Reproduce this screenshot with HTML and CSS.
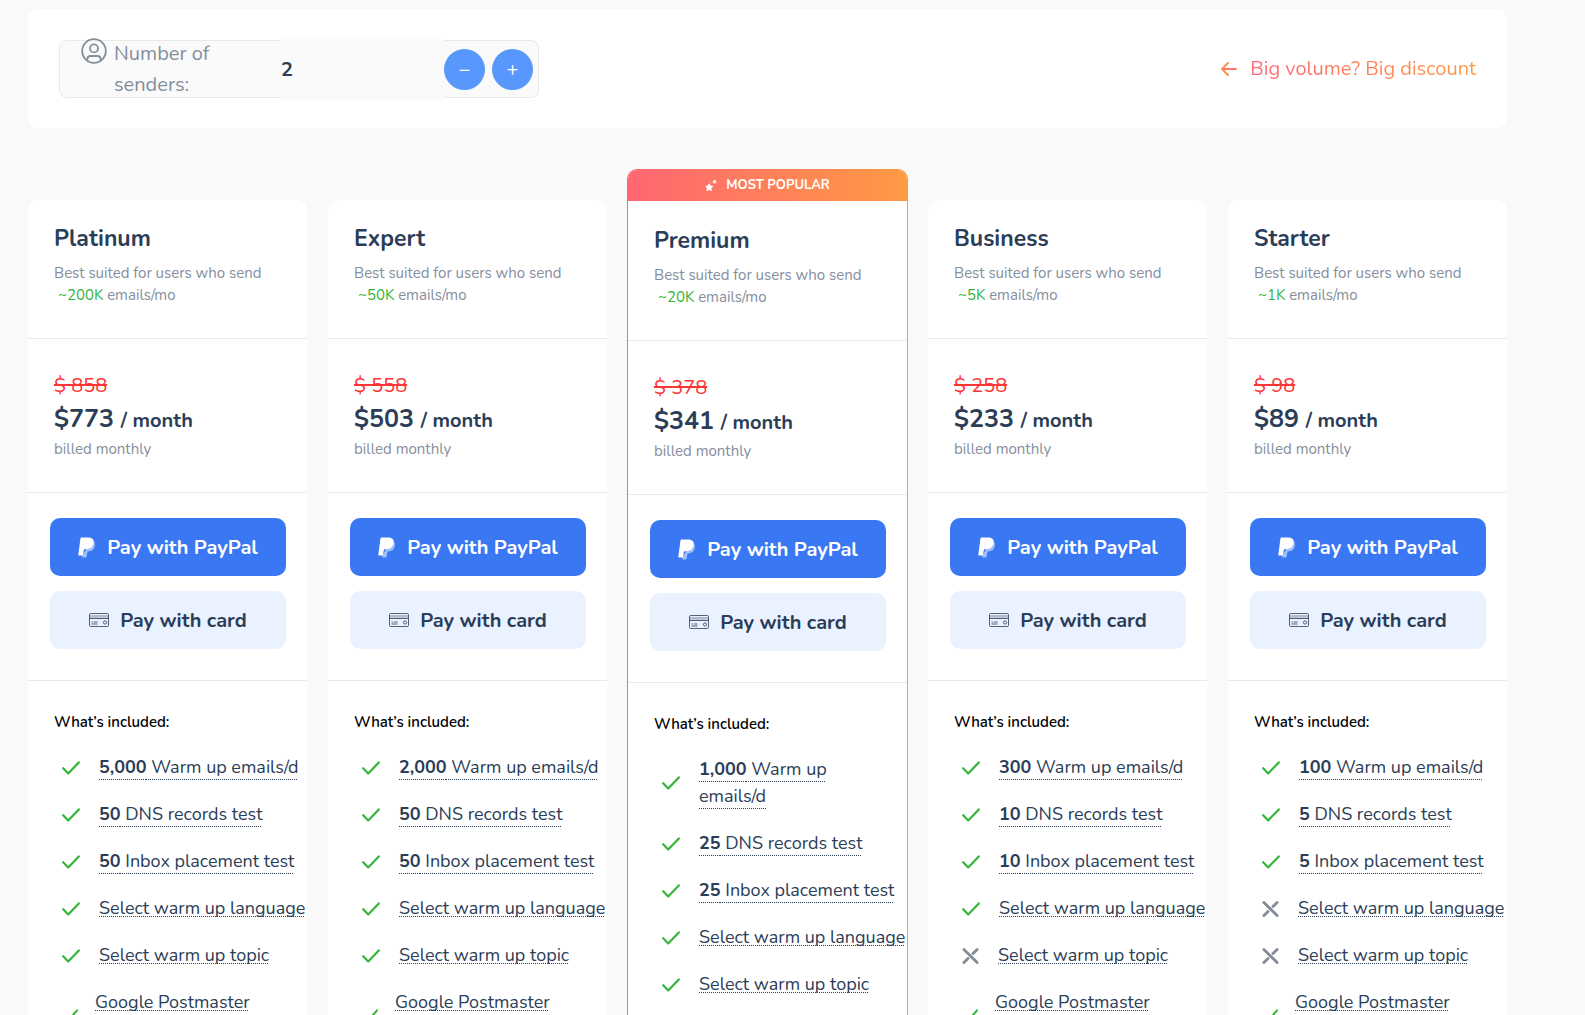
FILE: index.html
```html
<!DOCTYPE html>
<html lang="en">
<head>
    <meta charset="UTF-8">
    <meta name="viewport" content="width=device-width, initial-scale=1.0">
    <title>Pricing</title>
    <link rel="stylesheet" href="styles.css">
</head>
<body>

    <!-- Shared icons -->
    <svg class="icon-defs" aria-hidden="true">
        <symbol id="check" viewBox="0 0 18 14" preserveAspectRatio="none">
            <path d="M1.2 7.2 L6.2 12.4 L16.8 1.4" fill="none" stroke="#34b53a" stroke-width="2.2" stroke-linecap="round" stroke-linejoin="round"/>
        </symbol>
        <symbol id="cross" viewBox="0 0 18 18">
            <path d="M2 2 L16 16 M16 2 L11.6 6.4 M6.4 11.6 L2 16" fill="none" stroke="#858c98" stroke-width="3" stroke-linecap="round"/>
        </symbol>
        <symbol id="paypal" viewBox="0 0 18 21">
            <path d="M14.8 3.6 C16.8 4.8 17.4 6.8 16.7 9.6 C15.8 13 13.4 14.5 10.4 14.5 H9.6 L8.6 19.6 C8.5 20.3 8 20.6 7.4 20.6 H4.2 L4.7 17.6 Z" fill="#9fbff9"/>
            <path d="M3.4 0.4 H10.2 C14.4 0.4 16.4 2.6 15.6 6.3 C14.8 10.3 12 12.2 8.5 12.2 H6.8 C6.2 12.2 5.9 12.5 5.8 13.1 L4.9 18.6 H0.9 C0.4 18.6 0.2 18.3 0.3 17.8 L2.5 1.2 C2.6 0.7 2.9 0.4 3.4 0.4 Z" fill="#ffffff"/>
        </symbol>
        <symbol id="card" viewBox="0 0 20 14">
            <g fill="none" stroke="#2b3d57" stroke-width="0.8">
                <rect x="0.5" y="0.5" width="19" height="13" rx="1.2"/>
                <path d="M0.5 3 H19.5" stroke-width="0.6"/>
                <path d="M0.5 5.3 H19.5" stroke-width="1"/>
                <path d="M2.5 9 H4 M5 9 H8.5 M2.5 11 H8.5" stroke-width="0.8"/>
                <circle cx="16" cy="9.5" r="1.6"/>
            </g>
        </symbol>
    </svg>

    <div class="container">

        <!-- Senders bar -->
        <div class="topbar">
            <div class="senders">
                <svg class="user-icon" viewBox="0 0 26 26" fill="none" stroke="#858e9d" stroke-width="1.8" aria-hidden="true">
                    <circle cx="13" cy="13" r="11.8"/>
                    <circle cx="13" cy="10.4" r="4"/>
                    <path d="M6.4 22.4 V21 C6.4 19 7.6 18 9.4 18 H16.6 C18.4 18 19.6 19 19.6 21 V22.4"/>
                </svg>
                <label for="senders">Number of senders:</label>
                <input type="text" id="senders" value="2">
                <button type="button" class="round-btn" aria-label="Remove sender">−</button>
                <button type="button" class="round-btn" aria-label="Add sender">+</button>
            </div>
            <a href="#" class="discount">
                <svg width="16" height="14" viewBox="0 0 16 14" fill="none" stroke-width="2" stroke-linecap="round" stroke-linejoin="round" aria-hidden="true">
                    <path d="M15 7 H2" stroke="#ff7866"/>
                    <path d="M7 1 L1 7 L7 13" stroke="#ff8f4c"/>
                </svg>
                <span>Big volume? Big discount</span>
            </a>
        </div>

        <!-- Plans -->
        <div class="plans">

            <div class="plan">
                <div class="plan-head">
                    <h2>Platinum</h2>
                    <p>Best suited for users who send<br>&nbsp;<span class="volume">~200K</span> emails/mo</p>
                </div>
                <div class="plan-price">
                    <del>$ 858</del>
                    <div class="price">$773 <small>/ month</small></div>
                    <p>billed monthly</p>
                </div>
                <div class="plan-buttons">
                    <button type="button" class="btn btn-paypal"><svg width="18" height="21"><use href="#paypal"/></svg>Pay with PayPal</button>
                    <button type="button" class="btn btn-card"><svg width="20" height="14"><use href="#card"/></svg>Pay with card</button>
                </div>
                <div class="plan-features">
                    <h3>What’s included:</h3>
                    <ul>
                        <li><svg class="check"><use href="#check"/></svg><span class="count"><b>5,000</b> Warm up emails/d</span></li>
                        <li><svg class="check"><use href="#check"/></svg><span class="count"><b>50</b> DNS records test</span></li>
                        <li><svg class="check"><use href="#check"/></svg><span class="count"><b>50</b> Inbox placement test</span></li>
                        <li><svg class="check"><use href="#check"/></svg><span>Select warm up language</span></li>
                        <li><svg class="check"><use href="#check"/></svg><span>Select warm up topic</span></li>
                        <li class="wide"><svg class="check"><use href="#check"/></svg><span>Google Postmaster<br>integration</span></li>
                    </ul>
                </div>
            </div>

            <div class="plan">
                <div class="plan-head">
                    <h2>Expert</h2>
                    <p>Best suited for users who send<br>&nbsp;<span class="volume">~50K</span> emails/mo</p>
                </div>
                <div class="plan-price">
                    <del>$ 558</del>
                    <div class="price">$503 <small>/ month</small></div>
                    <p>billed monthly</p>
                </div>
                <div class="plan-buttons">
                    <button type="button" class="btn btn-paypal"><svg width="18" height="21"><use href="#paypal"/></svg>Pay with PayPal</button>
                    <button type="button" class="btn btn-card"><svg width="20" height="14"><use href="#card"/></svg>Pay with card</button>
                </div>
                <div class="plan-features">
                    <h3>What’s included:</h3>
                    <ul>
                        <li><svg class="check"><use href="#check"/></svg><span class="count"><b>2,000</b> Warm up emails/d</span></li>
                        <li><svg class="check"><use href="#check"/></svg><span class="count"><b>50</b> DNS records test</span></li>
                        <li><svg class="check"><use href="#check"/></svg><span class="count"><b>50</b> Inbox placement test</span></li>
                        <li><svg class="check"><use href="#check"/></svg><span>Select warm up language</span></li>
                        <li><svg class="check"><use href="#check"/></svg><span>Select warm up topic</span></li>
                        <li class="wide"><svg class="check"><use href="#check"/></svg><span>Google Postmaster<br>integration</span></li>
                    </ul>
                </div>
            </div>

            <div class="plan popular">
                <div class="badge">
                    <svg width="12" height="14" viewBox="0 0 12 14" fill="#ffffff" aria-hidden="true">
                        <path d="M4.2 5 L5.6 7.6 L8.4 8.2 L6.4 10.3 L6.8 13.2 L4.2 12 L1.5 13.2 L1.9 10.3 L0 8.2 L2.8 7.6 Z"/>
                        <path d="M9.6 1.4 L10.3 2.8 L11.8 3.1 L10.7 4.2 L11 5.8 L9.6 5 L8.1 5.8 L8.4 4.2 L7.3 3.1 L8.9 2.8 Z"/>
                    </svg>
                    MOST POPULAR
                </div>
                <div class="plan-head">
                    <h2>Premium</h2>
                    <p>Best suited for users who send<br>&nbsp;<span class="volume">~20K</span> emails/mo</p>
                </div>
                <div class="plan-price">
                    <del>$ 378</del>
                    <div class="price">$341 <small>/ month</small></div>
                    <p>billed monthly</p>
                </div>
                <div class="plan-buttons">
                    <button type="button" class="btn btn-paypal"><svg width="18" height="21"><use href="#paypal"/></svg>Pay with PayPal</button>
                    <button type="button" class="btn btn-card"><svg width="20" height="14"><use href="#card"/></svg>Pay with card</button>
                </div>
                <div class="plan-features">
                    <h3>What’s included:</h3>
                    <ul>
                        <li><svg class="check"><use href="#check"/></svg><span class="count"><b>1,000</b> Warm up<br>emails/d</span></li>
                        <li><svg class="check"><use href="#check"/></svg><span class="count"><b>25</b> DNS records test</span></li>
                        <li><svg class="check"><use href="#check"/></svg><span class="count"><b>25</b> Inbox placement test</span></li>
                        <li><svg class="check"><use href="#check"/></svg><span>Select warm up language</span></li>
                        <li><svg class="check"><use href="#check"/></svg><span>Select warm up topic</span></li>
                        <li class="wide"><svg class="check"><use href="#check"/></svg><span>Google Postmaster<br>integration</span></li>
                    </ul>
                </div>
            </div>

            <div class="plan">
                <div class="plan-head">
                    <h2>Business</h2>
                    <p>Best suited for users who send<br>&nbsp;<span class="volume">~5K</span> emails/mo</p>
                </div>
                <div class="plan-price">
                    <del>$ 258</del>
                    <div class="price">$233 <small>/ month</small></div>
                    <p>billed monthly</p>
                </div>
                <div class="plan-buttons">
                    <button type="button" class="btn btn-paypal"><svg width="18" height="21"><use href="#paypal"/></svg>Pay with PayPal</button>
                    <button type="button" class="btn btn-card"><svg width="20" height="14"><use href="#card"/></svg>Pay with card</button>
                </div>
                <div class="plan-features">
                    <h3>What’s included:</h3>
                    <ul>
                        <li><svg class="check"><use href="#check"/></svg><span class="count"><b>300</b> Warm up emails/d</span></li>
                        <li><svg class="check"><use href="#check"/></svg><span class="count"><b>10</b> DNS records test</span></li>
                        <li><svg class="check"><use href="#check"/></svg><span class="count"><b>10</b> Inbox placement test</span></li>
                        <li><svg class="check"><use href="#check"/></svg><span>Select warm up language</span></li>
                        <li><svg class="cross"><use href="#cross"/></svg><span>Select warm up topic</span></li>
                        <li class="wide"><svg class="check"><use href="#check"/></svg><span>Google Postmaster<br>integration</span></li>
                    </ul>
                </div>
            </div>

            <div class="plan">
                <div class="plan-head">
                    <h2>Starter</h2>
                    <p>Best suited for users who send<br>&nbsp;<span class="volume">~1K</span> emails/mo</p>
                </div>
                <div class="plan-price">
                    <del>$ 98</del>
                    <div class="price">$89 <small>/ month</small></div>
                    <p>billed monthly</p>
                </div>
                <div class="plan-buttons">
                    <button type="button" class="btn btn-paypal"><svg width="18" height="21"><use href="#paypal"/></svg>Pay with PayPal</button>
                    <button type="button" class="btn btn-card"><svg width="20" height="14"><use href="#card"/></svg>Pay with card</button>
                </div>
                <div class="plan-features">
                    <h3>What’s included:</h3>
                    <ul>
                        <li><svg class="check"><use href="#check"/></svg><span class="count"><b>100</b> Warm up emails/d</span></li>
                        <li><svg class="check"><use href="#check"/></svg><span class="count"><b>5</b> DNS records test</span></li>
                        <li><svg class="check"><use href="#check"/></svg><span class="count"><b>5</b> Inbox placement test</span></li>
                        <li><svg class="cross"><use href="#cross"/></svg><span>Select warm up language</span></li>
                        <li><svg class="cross"><use href="#cross"/></svg><span>Select warm up topic</span></li>
                        <li class="wide"><svg class="check"><use href="#check"/></svg><span>Google Postmaster<br>integration</span></li>
                    </ul>
                </div>
            </div>

        </div>
    </div>

</body>
</html>
```
FILE: styles.css
```css
* {
    box-sizing: border-box;
}
body {
    margin: 0;
    background-color: #f9f9f9;
    color: #2b3d57;
    font-family: Nunito, Lato, "Open Sans", sans-serif;
}
h2, h3, p, ul {
    margin: 0;
    padding: 0;
}
.icon-defs {
    display: none;
}
.container {
    padding: 9px 78px 40px 28px;
}
/* Senders bar */
.topbar {
    display: flex;
    justify-content: space-between;
    align-items: center;
    padding: 31px 31px 30px;
    background-color: #fff;
    border-radius: 10px;
}
.senders {
    display: flex;
    align-items: center;
    width: 480px;
    height: 58px;
    padding: 0 5px 0 21px;
    background-color: #fafafa;
    border: 1px solid #e9e9e9;
    border-radius: 8px;
}
.user-icon {
    flex: none;
    align-self: flex-start;
    width: 26px;
    height: 26px;
    margin-top: -3px;
    margin-right: 7px;
}
.senders label {
    flex: 1;
    padding-right: 60px;
    font-size: 20px;
    line-height: 31px;
    color: #858e9d;
}
.senders input {
    flex: none;
    width: 163px;
    height: 61px;
    padding: 0;
    border: none;
    background-color: #fafafa;
    color: #2b3d57;
    font-family: inherit;
    font-size: 20px;
    font-weight: 700;
}
.round-btn {
    flex: none;
    width: 41px;
    height: 41px;
    padding: 0;
    border: none;
    border-radius: 50%;
    background-color: #5897fc;
    color: #fff;
    font-family: inherit;
    font-size: 20px;
    cursor: pointer;
}
.round-btn + .round-btn {
    margin-left: 7px;
}
.discount {
    display: flex;
    align-items: center;
    gap: 13px;
    font-size: 20px;
    line-height: 30px;
    text-decoration: none;
}
.discount span {
    background: linear-gradient(90deg, #ff6672, #ff9a44);
    -webkit-background-clip: text;
    background-clip: text;
    color: transparent;
}
/* Plans */
.plans {
    display: grid;
    grid-template-columns: repeat(5, minmax(0, 1fr));
    gap: 21px;
    align-items: start;
    margin-top: 41px;
}
.plan {
    margin-top: 31px;
    background-color: #fff;
    border-radius: 10px;
}
.popular {
    margin: 0 -1px;
    border: 1px solid transparent;
    background: linear-gradient(#fff, #fff) padding-box, linear-gradient(90deg, #ff6672, #ff9a44) border-box;
}
.badge {
    display: flex;
    justify-content: center;
    align-items: center;
    gap: 9px;
    height: 31px;
    padding-bottom: 2px;
    border-radius: 9px 9px 0 0;
    background: linear-gradient(90deg, #ff6672, #ff9a44);
    color: #fff;
    font-size: 13px;
    font-weight: 700;
}
.plan-head {
    height: 139px;
    padding: 22px 26px 0;
    border-bottom: 1px solid #e9e9e9;
}
.popular .plan-head {
    height: 140px;
    padding-top: 23px;
}
.plan-head h2 {
    font-size: 23px;
    font-weight: 700;
    line-height: 34px;
}
.plan-head p, .plan-price p {
    font-size: 15px;
    line-height: 22px;
    color: #858e9d;
    white-space: nowrap;
}
.plan-head p {
    margin-top: 6px;
}
.volume {
    color: #34b53a;
}
.plan-price {
    height: 154px;
    padding: 31px 26px 0;
    border-bottom: 1px solid #e9e9e9;
}
.plan-price del {
    display: block;
    font-size: 20px;
    line-height: 32px;
    color: #fc3535;
    text-decoration-thickness: 2px;
}
.price {
    font-size: 25px;
    font-weight: 700;
    line-height: 34px;
}
.price small {
    font-size: 20px;
}
.plan-buttons {
    display: flex;
    flex-direction: column;
    gap: 15px;
    padding: 25px 21px 31px 22px;
    border-bottom: 1px solid #e9e9e9;
}
.btn {
    display: flex;
    justify-content: center;
    align-items: center;
    gap: 11px;
    height: 58px;
    padding: 0;
    border: none;
    border-radius: 10px;
    font-family: inherit;
    font-size: 20px;
    font-weight: 700;
    cursor: pointer;
}
.btn-paypal {
    background-color: #3a77f3;
    color: #fff;
}
.btn-card {
    background-color: #eaf1ff;
    color: #2b3d57;
}
.plan-features {
    padding: 29px 0 30px 26px;
}
.plan-features h3 {
    font-size: 15px;
    font-weight: 600;
    line-height: 24px;
    color: #000;
}
.plan-features ul {
    display: flex;
    flex-direction: column;
    gap: 20px;
    margin-top: 20px;
    padding-left: 8px;
    list-style: none;
}
.plan-features li {
    display: flex;
    align-items: center;
    gap: 19px;
    font-size: 18px;
    line-height: 27px;
    white-space: nowrap;
}
.plan-features li span {
    text-decoration: underline dotted 1px;
    text-underline-offset: 2px;
    text-decoration-skip-ink: none;
}
.plan-features li .count {
    text-underline-offset: 6px;
}
.check {
    flex: none;
    width: 18px;
    height: 14px;
}
.cross {
    flex: none;
    width: 17px;
    height: 18px;
}
.wide .check {
    width: 16px;
}
.plan-features .wide {
    gap: 17px;
}
```
